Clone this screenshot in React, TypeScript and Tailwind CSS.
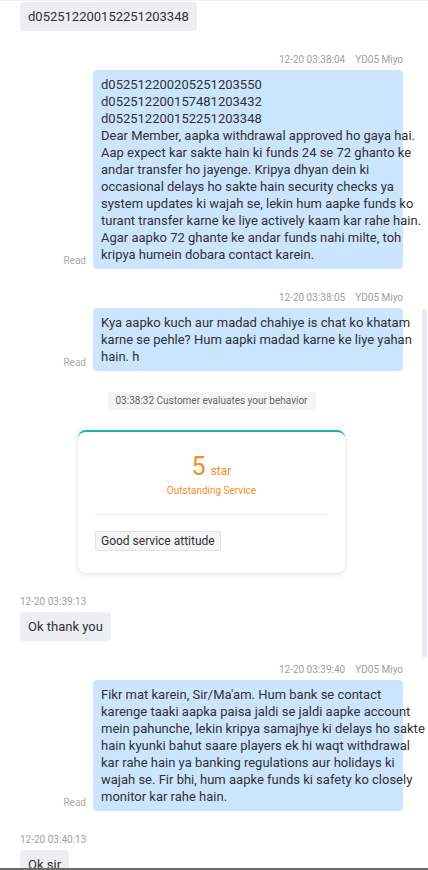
import React from "react";

const FONT = { fontFamily: 'Roboto, "Noto Sans", sans-serif' };

function Ts({ children, right }: { children: React.ReactNode; right?: boolean }) {
  return (
    <div className={`text-[10px] leading-[14px] text-[#a0a0a0] mb-[3px] ${right ? "text-right" : ""}`}>
      {children}
    </div>
  );
}

function AgentMsg({ time, lines }: { time: string; lines: string[] }) {
  return (
    <div className="mt-[22px]">
      <Ts right>
        {time}
        <span className="ml-[10px]">YD05 Miyo</span>
      </Ts>
      <div className="flex justify-end items-end gap-[7px]">
        <span className="text-[10px] leading-[14px] text-[#aaaaaa] mb-[1px]">Read</span>
        <div className="w-[310px] bg-[#cce5fe] rounded-[4px] px-[8px] py-[6px] text-[13px] leading-[17px] text-[#303133]">
          {lines.map((l, i) => (
            <div key={i} className="whitespace-nowrap">{l}</div>
          ))}
        </div>
      </div>
    </div>
  );
}

function UserMsg({ time, text, first }: { time?: string; text: string; first?: boolean }) {
  return (
    <div className={first ? "" : "mt-[22px]"}>
      {time && <Ts>{time}</Ts>}
      <div className="flex">
        <div className="bg-[#eceef1] rounded-[4px] px-[8px] py-[6px] text-[13px] leading-[17px] text-[#303133] whitespace-nowrap">
          {text}
        </div>
      </div>
    </div>
  );
}

export default function App() {
  return (
    <div className="relative w-[428px] h-[870px] overflow-hidden bg-white border-t border-[#eef0f4] border-b-2 border-b-[#6b6b6b]" style={FONT}>
      <div className="pl-[20px] pr-[25px] pt-[1px]">
        <UserMsg first text="d052512200152251203348" />
        <AgentMsg
          time="12-20 03:38:04"
          lines={[
            "d052512200205251203550",
            "d052512200157481203432",
            "d052512200152251203348",
            "Dear Member, aapka withdrawal approved ho gaya hai.",
            "Aap expect kar sakte hain ki funds 24 se 72 ghanto ke",
            "andar transfer ho jayenge. Kripya dhyan dein ki",
            "occasional delays ho sakte hain security checks ya",
            "system updates ki wajah se, lekin hum aapke funds ko",
            "turant transfer karne ke liye actively kaam kar rahe hain.",
            "Agar aapko 72 ghante ke andar funds nahi milte, toh",
            "kripya humein dobara contact karein.",
          ]}
        />
        <AgentMsg
          time="12-20 03:38:05"
          lines={[
            "Kya aapko kuch aur madad chahiye is chat ko khatam",
            "karne se pehle? Hum aapki madad karne ke liye yahan",
            "hain. h",
          ]}
        />
        <div className="mt-[21px] flex justify-center">
          <div className="bg-[#f5f5f6] rounded-[3px] px-[8px] text-[10px] leading-[18px] text-[#666666]">
            03:38:32 Customer evaluates your behavior
          </div>
        </div>
        <div className="mt-[20px] flex justify-center">
          <div className="w-[267px] bg-white rounded-[8px] border-t-2 border-[#17b3b3] shadow-[0_1px_6px_rgba(0,0,0,0.12)] px-[17px] pt-[22px] pb-[22px]">
            <div className="flex items-baseline justify-center text-[#f0901e] leading-[26px]">
              <span className="text-[25px]">5</span>
              <span className="text-[12px] ml-[5px]">star</span>
            </div>
            <div className="text-center text-[10px] leading-[14px] text-[#f0901e]">Outstanding Service</div>
            <div className="mt-[16px] h-px bg-[#ececec]" />
            <div className="mt-[16px] flex">
              <span className="bg-[#f5f5f5] border border-[#e2e2e2] px-[5px] text-[12px] leading-[18px] text-[#303133] rounded-[1px]">
                Good service attitude
              </span>
            </div>
          </div>
        </div>
        <UserMsg time="12-20 03:39:13" text="Ok thank you" />
        <AgentMsg
          time="12-20 03:39:40"
          lines={[
            "Fikr mat karein, Sir/Ma'am. Hum bank se contact",
            "karenge taaki aapka paisa jaldi se jaldi aapke account",
            "mein pahunche, lekin kripya samajhye ki delays ho sakte",
            "hain kyunki bahut saare players ek hi waqt withdrawal",
            "kar rahe hain ya banking regulations aur holidays ki",
            "wajah se. Fir bhi, hum aapke funds ki safety ko closely",
            "monitor kar rahe hain.",
          ]}
        />
        <UserMsg time="12-20 03:40:13" text="Ok sir" />
      </div>
      <div className="absolute right-[1px] top-[308px] w-[5px] h-[348px] bg-[#e4e9f2] rounded-[2px]" />
    </div>
  );
}
